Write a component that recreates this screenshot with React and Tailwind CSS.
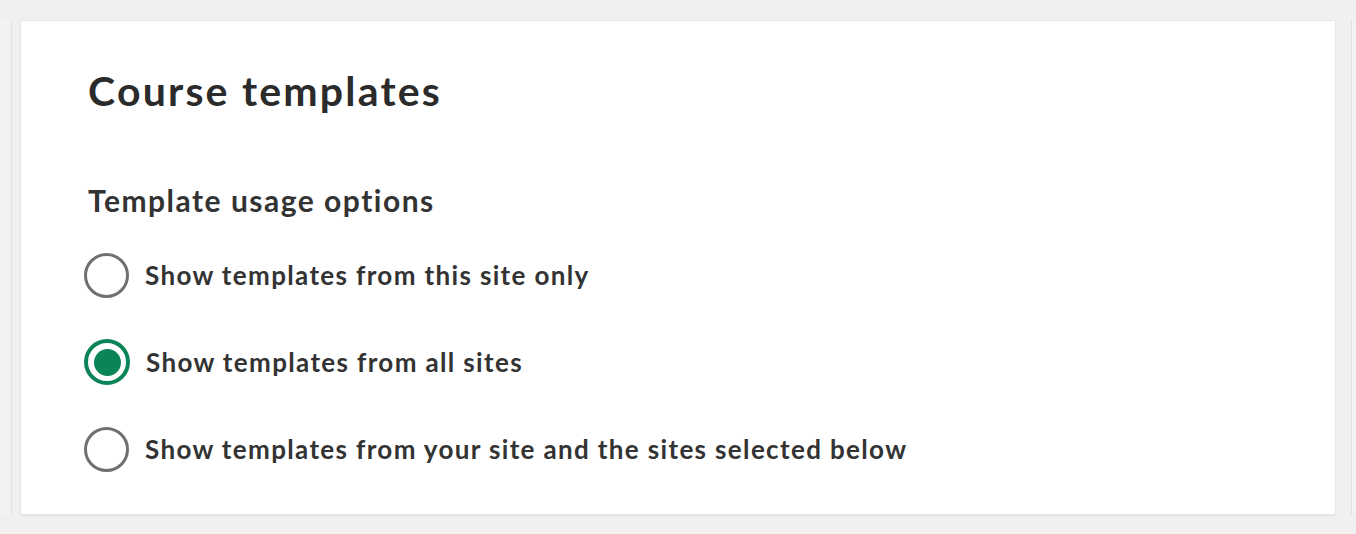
export default function App() {
  const options = [
    { label: "Show templates from this site only", checked: false },
    { label: "Show templates from all sites", checked: true },
    { label: "Show templates from your site and the sites selected below", checked: false },
  ];
  return (
    <div
      className="w-[1356px] h-[534px] bg-[#f0f0f0] flex items-start pt-[20px] overflow-hidden"
      style={{ fontFamily: "Lato, 'Open Sans', sans-serif" }}
    >
      <div className="w-[12px] h-[495px] shrink-0 bg-[#f2f2f2] border-r border-[#e0e0e0]" />
      <div className="ml-[8px] w-[1316px] h-[495px] shrink-0 bg-white border border-[#e6e6e6] rounded-[2px] shadow-[0_1px_2px_rgba(0,0,0,0.06)] pl-[67px] pt-[42px]">
        <h1 className="text-[41px] leading-[56px] font-bold text-[#2b2b2b] tracking-[2.2px]">Course templates</h1>
        <h2 className="mt-[61px] text-[30px] leading-[40px] font-bold text-[#333333] tracking-[1.5px]">Template usage options</h2>
        <div className="mt-[33px] flex flex-col gap-[43px] -ml-[4px]">
          {options.map((o) => (
            <div key={o.label} className="flex items-center h-[44px]">
              {o.checked ? (
                <span className="w-[46px] h-[46px] rounded-full border-[4px] border-[#0b8457] flex items-center justify-center shrink-0">
                  <span className="w-[27px] h-[27px] rounded-full bg-[#0b8457]" />
                </span>
              ) : (
                <span className="w-[45px] h-[45px] rounded-full border-[3px] border-[#707070] shrink-0" />
              )}
              <span className="ml-[16px] text-[26px] font-bold text-[#333333] tracking-[1.35px]">{o.label}</span>
            </div>
          ))}
        </div>
      </div>
      <div className="ml-[15px] w-[6px] h-[495px] shrink-0 bg-[#f2f2f2] border-l border-[#e0e0e0]" />
    </div>
  );
}
